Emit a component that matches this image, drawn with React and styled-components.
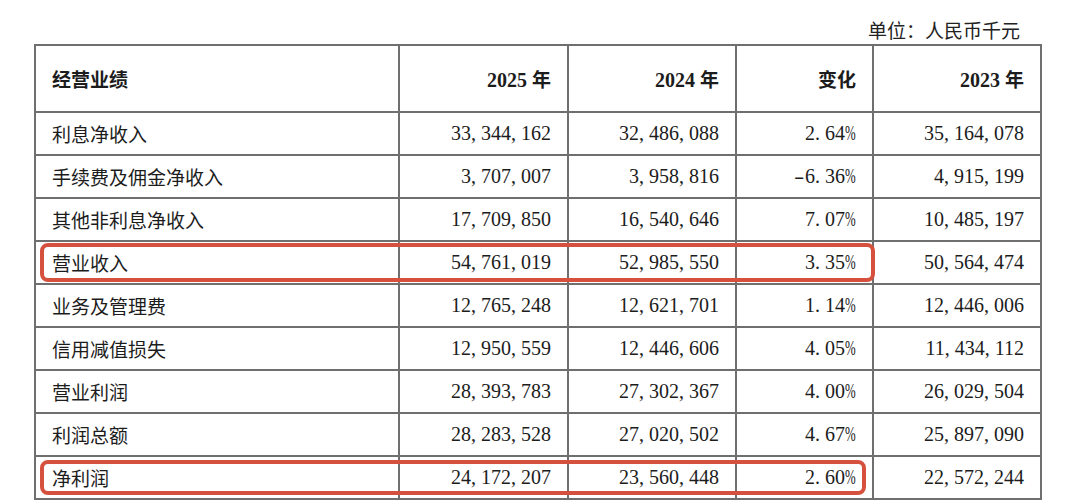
import React from "react";
import styled, { createGlobalStyle } from "styled-components";

const Global = createGlobalStyle`
  html, body { margin: 0; padding: 0; background: #ffffff; }
  body { font-family: "Liberation Serif", "Noto Sans CJK SC", serif; color: #1c1c1c; }
`;

const COLS = "364px 169px 168px 137px 168px";
const LINE = "#6f6f6f";

const Page = styled.div`
  width: 1080px;
  height: 500px;
  overflow: hidden;
  padding-left: 34px;
  box-sizing: border-box;
`;

const Caption = styled.div`
  width: 1008px;
  box-sizing: border-box;
  height: 44px;
  padding-top: 20px;
  padding-right: 22px;
  text-align: right;
  font-family: "Noto Sans CJK SC", sans-serif;
  font-size: 19px;
  line-height: 20px;
  font-weight: 400;
  color: #222;
`;

const Table = styled.div`
  width: 1008px;
  box-sizing: border-box;
  border-top: 2px solid ${LINE};
  border-left: 2px solid ${LINE};
`;

const Row = styled.div`
  position: relative;
  display: grid;
  grid-template-columns: ${COLS};
  height: ${(p) => (p.$head ? "67px" : "43px")};
  font-weight: ${(p) => (p.$head ? 700 : 400)};
`;

const Cell = styled.div`
  box-sizing: border-box;
  display: flex;
  align-items: center;
  justify-content: ${(p) => (p.$left ? "flex-start" : "flex-end")};
  padding: ${(p) => (p.$left ? "0 0 0 16px" : "0 16px 0 0")};
  border-right: 2px solid ${LINE};
  border-bottom: 2px solid ${LINE};
  font-size: 20px;
  white-space: nowrap;
`;

const Label = styled.span`
  font-family: "Noto Sans CJK SC", sans-serif;
  font-size: 19px;
  letter-spacing: 0;
`;

const Punct = styled.span`
  margin-right: 5px;
`;

const Pct = styled.span`
  display: inline-block;
  width: 11px;
  transform: scaleX(0.64);
  transform-origin: left center;
`;

const Minus = styled.span`
  display: inline-block;
  width: 11px;
  transform: scaleX(1.55);
  transform-origin: left center;
`;

const Highlight = styled.div`
  position: absolute;
  left: 4px;
  top: ${(p) => p.$inset}px;
  bottom: ${(p) => p.$inset + 2}px;
  width: ${(p) => p.$width}px;
  box-sizing: border-box;
  border: 4px solid #d5513d;
  border-radius: 8px;
  pointer-events: none;
`;

function Num({ v }) {
  const parts = [];
  v.split("").forEach((ch, i) => {
    if (ch === "," || ch === ".") parts.push(<Punct key={i}>{ch}</Punct>);
    else if (ch === "%") parts.push(<Pct key={i}>{ch}</Pct>);
    else if (ch === "-") parts.push(<Minus key={i}>{ch}</Minus>);
    else parts.push(<React.Fragment key={i}>{ch}</React.Fragment>);
  });
  return <span>{parts}</span>;
}

const rows = [
  ["利息净收入", "33,344,162", "32,486,088", "2.64%", "35,164,078"],
  ["手续费及佣金净收入", "3,707,007", "3,958,816", "-6.36%", "4,915,199"],
  ["其他非利息净收入", "17,709,850", "16,540,646", "7.07%", "10,485,197"],
  ["营业收入", "54,761,019", "52,985,550", "3.35%", "50,564,474", { width: 835, inset: 1 }],
  ["业务及管理费", "12,765,248", "12,621,701", "1.14%", "12,446,006"],
  ["信用减值损失", "12,950,559", "12,446,606", "4.05%", "11,434,112"],
  ["营业利润", "28,393,783", "27,302,367", "4.00%", "26,029,504"],
  ["利润总额", "28,283,528", "27,020,502", "4.67%", "25,897,090"],
  ["净利润", "24,172,207", "23,560,448", "2.60%", "22,572,244", { width: 826, inset: 3 }],
];

function Year({ y }) {
  return (
    <span>
      {y} <Label>年</Label>
    </span>
  );
}

export default function App() {
  return (
    <Page>
      <Global />
      <Caption>单位：人民币千元</Caption>
      <Table>
        <Row $head>
          <Cell $left>
            <Label>经营业绩</Label>
          </Cell>
          <Cell>
            <Year y="2025" />
          </Cell>
          <Cell>
            <Year y="2024" />
          </Cell>
          <Cell>
            <Label>变化</Label>
          </Cell>
          <Cell>
            <Year y="2023" />
          </Cell>
        </Row>
        {rows.map((r) => (
          <Row key={r[0]}>
            <Cell $left>
              <Label>{r[0]}</Label>
            </Cell>
            <Cell>
              <Num v={r[1]} />
            </Cell>
            <Cell>
              <Num v={r[2]} />
            </Cell>
            <Cell>
              <Num v={r[3]} />
            </Cell>
            <Cell>
              <Num v={r[4]} />
            </Cell>
            {r[5] && <Highlight $width={r[5].width} $inset={r[5].inset} />}
          </Row>
        ))}
      </Table>
    </Page>
  );
}
